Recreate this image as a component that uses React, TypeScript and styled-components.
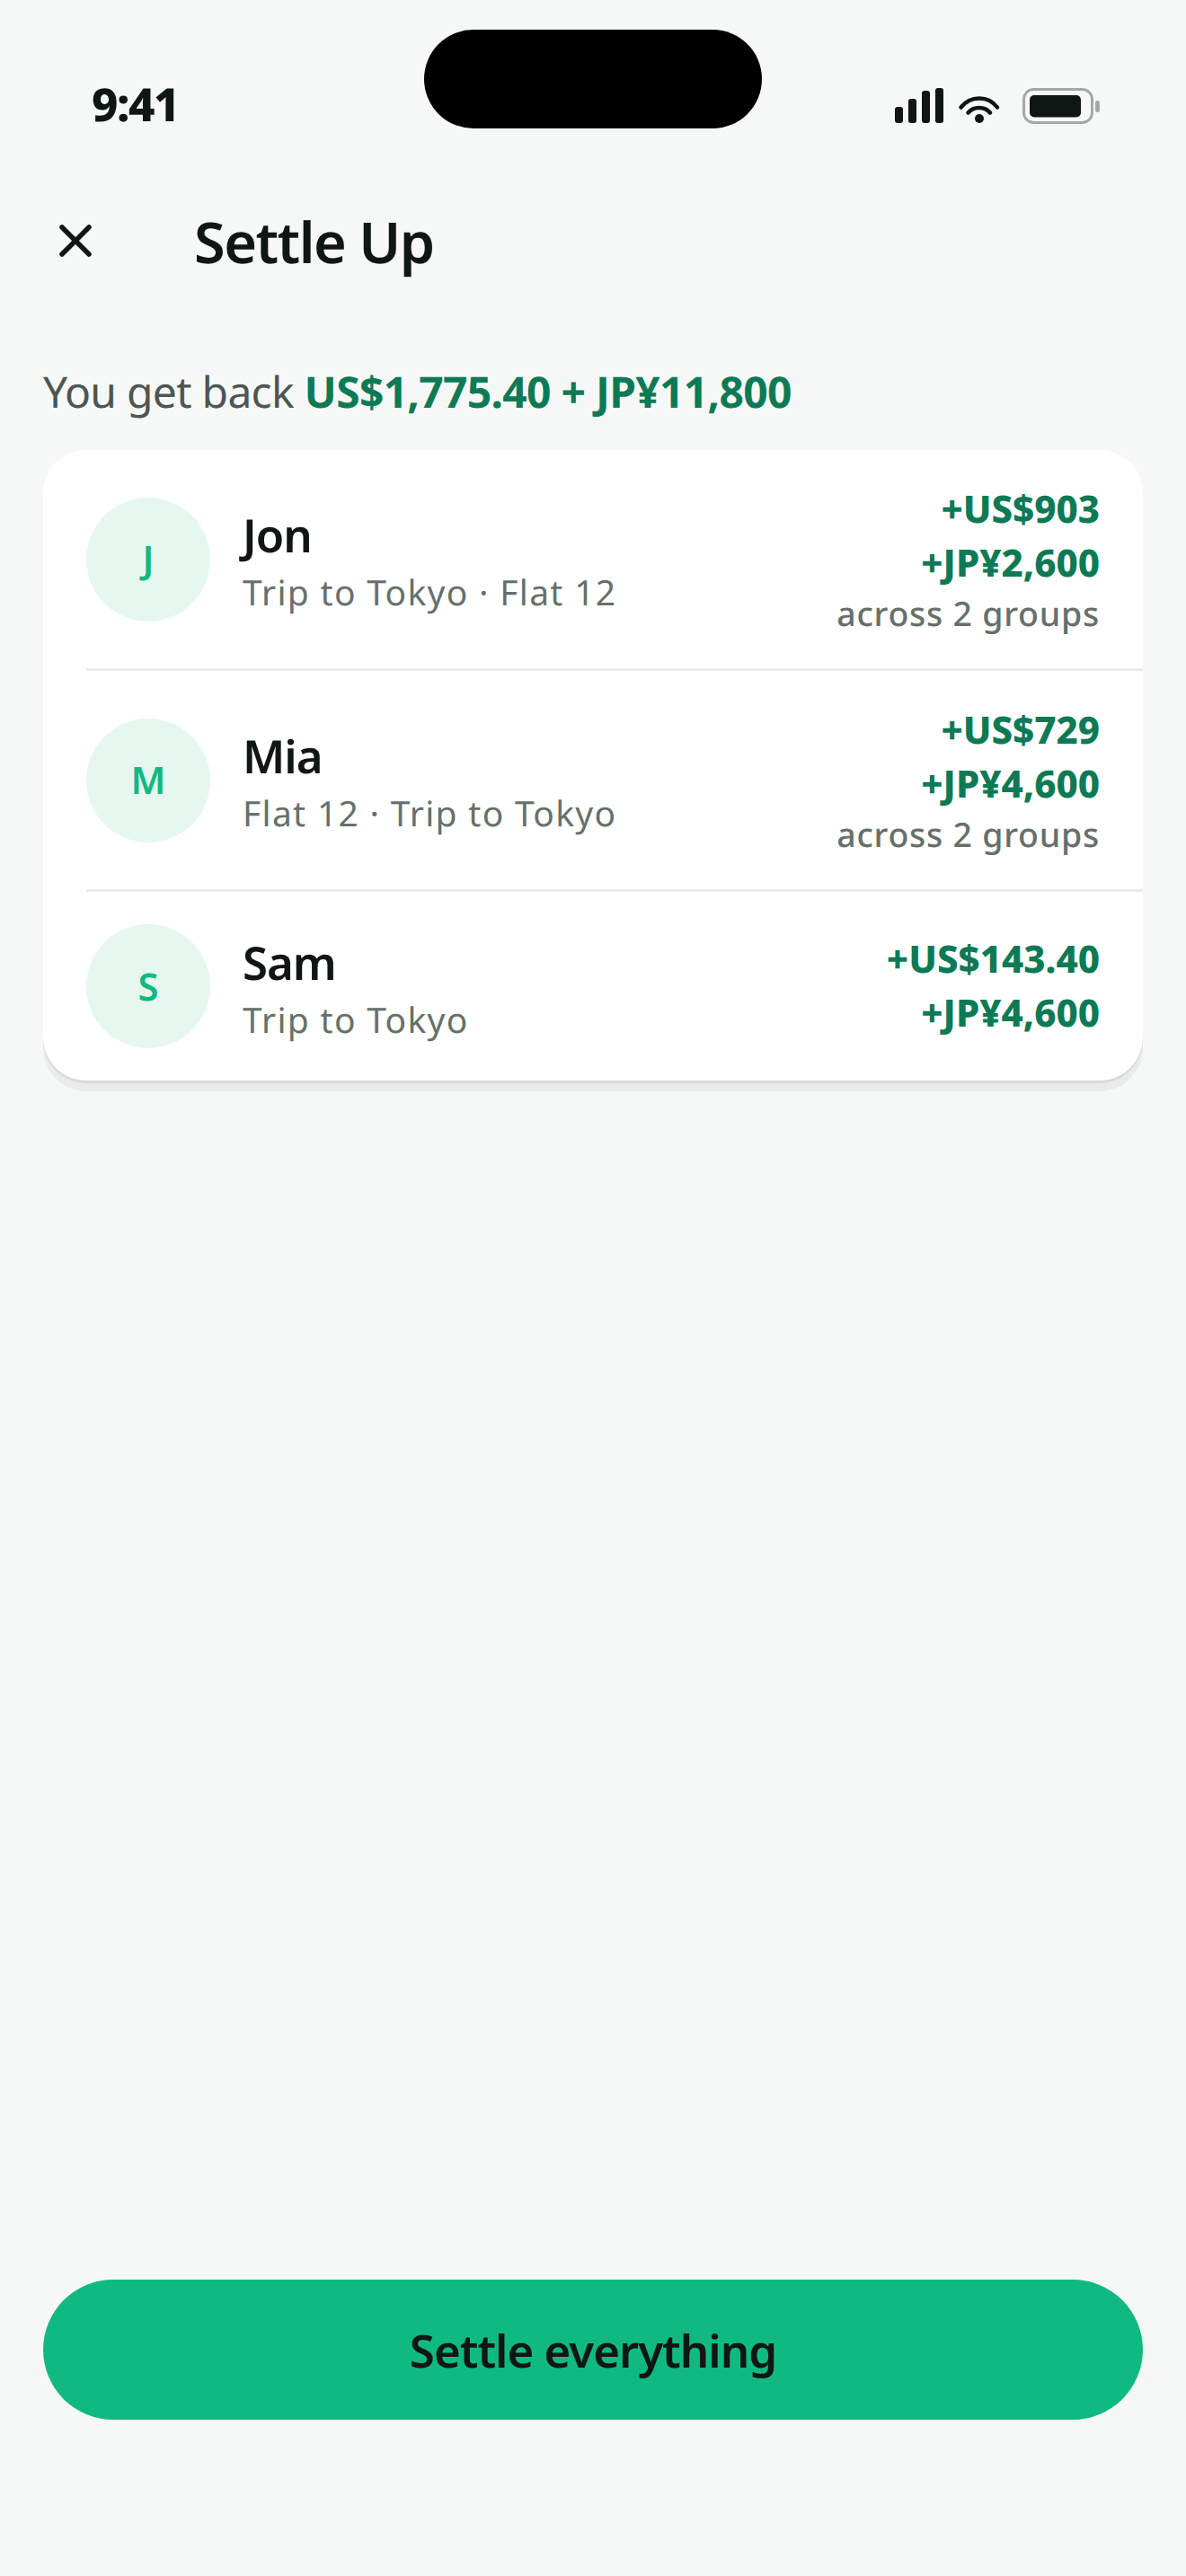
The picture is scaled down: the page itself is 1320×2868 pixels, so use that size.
import { X } from "lucide-react";
import styled, { createGlobalStyle } from "styled-components";

const GlobalStyle = createGlobalStyle`
  html, body {
    margin: 0;
    padding: 0;
    background: #f6f8f7;
  }
  body {
    font-family: "Noto Sans", "Open Sans", sans-serif;
    color: #101614;
    text-rendering: geometricPrecision;
  }
`;

const Screen = styled.div`
  width: 1320px;
  height: 2868px;
  display: flex;
  flex-direction: column;
  background: #f6f8f7;
  overflow: hidden;
`;

const StatusBar = styled.div`
  height: 176px;
  display: grid;
  grid-template-columns: 1fr 376px 1fr;
  padding-top: 33px;
  box-sizing: border-box;
`;

const Time = styled.div`
  padding: 47px 0 0 102px;
  font-size: 51px;
  line-height: 70px;
  font-weight: 800;
  letter-spacing: -1.5px;
`;

const Island = styled.div`
  width: 376px;
  height: 110px;
  border-radius: 55px;
  background: #000;
`;

const StatusIcons = styled.div`
  display: flex;
  align-items: flex-start;
  padding: 65px 0 0 148px;
`;

const Header = styled.header`
  height: 72px;
  margin-top: 56px;
  padding-left: 48px;
  display: flex;
  align-items: center;
  gap: 96px;
`;

const CloseButton = styled.button`
  width: 72px;
  height: 72px;
  padding: 0;
  border: 0;
  background: none;
  color: #101614;
  display: flex;
  align-items: center;
  justify-content: center;
`;

const Title = styled.h1`
  margin: 4px 0 0;
  font-size: 63px;
  line-height: 78px;
  font-weight: 600;
  letter-spacing: -1.5px;
`;

const Summary = styled.p`
  margin: 100px 48px 0;
  font-size: 48px;
  line-height: 66px;
  letter-spacing: -0.72px;
  color: #4d5652;

  strong {
    font-weight: 700;
    color: #0e7a55;
  }
`;

const Card = styled.section`
  margin: 31px 48px 0;
  background: #fff;
  border-radius: 48px;
  box-shadow: 0 3px 0 rgba(16, 22, 20, 0.08), 0 12px 0 rgba(16, 22, 20, 0.05);
`;

const Row = styled.div<{ $last?: boolean }>`
  margin-left: 48px;
  padding: 36px 48px 36px 0;
  display: flex;
  align-items: center;
  gap: 36px;
  border-bottom: ${(p) => (p.$last ? "none" : "3px solid #e8ecea")};
`;

const Avatar = styled.div`
  width: 138px;
  height: 138px;
  flex: none;
  border-radius: 50%;
  background: #e6f7f0;
  color: #10b981;
  display: flex;
  align-items: center;
  justify-content: center;
  font-size: 42px;
  font-weight: 600;
`;

const Person = styled.div`
  flex: 1;
  min-width: 0;
`;

const Name = styled.div`
  font-size: 51px;
  line-height: 75px;
  font-weight: 600;
  letter-spacing: -1.02px;
`;

const Groups = styled.div`
  font-size: 39px;
  line-height: 54px;
  letter-spacing: 1.3px;
  color: #667069;
`;

const Amounts = styled.div`
  text-align: right;
`;

const Amount = styled.div`
  font-size: 42px;
  line-height: 60px;
  font-weight: 800;
  color: #0e7a55;
`;

const Caption = styled.div`
  font-size: 37.5px;
  line-height: 51px;
  font-weight: 500;
  letter-spacing: 0.75px;
  color: #667069;
`;

const Footer = styled.div`
  margin-top: auto;
  padding: 0 48px 174px;
`;

const SettleButton = styled.button`
  width: 100%;
  height: 156px;
  border: 0;
  border-radius: 78px;
  background: #10b981;
  color: #101614;
  font-family: inherit;
  font-size: 51px;
  font-weight: 600;
  letter-spacing: -1.02px;
`;

const friends = [
  { name: "Jon", groups: "Trip to Tokyo · Flat 12", amounts: ["+US$903", "+JP¥2,600"], caption: "across 2 groups" },
  { name: "Mia", groups: "Flat 12 · Trip to Tokyo", amounts: ["+US$729", "+JP¥4,600"], caption: "across 2 groups" },
  { name: "Sam", groups: "Trip to Tokyo", amounts: ["+US$143.40", "+JP¥4,600"] },
];

const App = () => {
  return (
    <Screen>
      <GlobalStyle />
      <StatusBar>
        <Time>9:41</Time>
        <Island />
        <StatusIcons>
          <svg width="228" height="42" viewBox="0 0 228 42" fill="none">
            <rect x="0" y="21" width="9" height="18" rx="3" fill="#101614" />
            <rect x="15" y="12" width="9" height="27" rx="3" fill="#101614" />
            <rect x="30" y="3" width="9" height="36" rx="3" fill="#101614" />
            <rect x="45" y="-0" width="9" height="39" rx="3" fill="#101614" />
            <path d="M73.5 21.5C84 8 104 8 114 21.5" stroke="#101614" strokeWidth="4.5" strokeLinecap="round" />
            <path d="M81.5 27.5C87.5 20 100 20 106 27.5" stroke="#101614" strokeWidth="4.5" strokeLinecap="round" />
            <circle cx="94" cy="34" r="5" fill="#101614" />
            <rect x="143.5" y="1.5" width="76" height="37" rx="11" stroke="#a6a8a7" strokeWidth="3" />
            <rect x="150" y="8" width="57" height="24.5" rx="5" fill="#101614" />
            <rect x="223" y="14" width="5" height="13" rx="2.5" fill="#a6a8a7" />
          </svg>
        </StatusIcons>
      </StatusBar>
      <Header>
        <CloseButton aria-label="Close">
          <X size={60} strokeWidth={2.2} />
        </CloseButton>
        <Title>Settle Up</Title>
      </Header>
      <Summary>
        You get back <strong>US$1,775.40 + JP¥11,800</strong>
      </Summary>
      <Card>
        {friends.map((f, i) => (
          <Row key={f.name} $last={i === friends.length - 1}>
            <Avatar>{f.name[0]}</Avatar>
            <Person>
              <Name>{f.name}</Name>
              <Groups>{f.groups}</Groups>
            </Person>
            <Amounts>
              {f.amounts.map((a) => (
                <Amount key={a}>{a}</Amount>
              ))}
              {f.caption && <Caption>{f.caption}</Caption>}
            </Amounts>
          </Row>
        ))}
      </Card>
      <Footer>
        <SettleButton>Settle everything</SettleButton>
      </Footer>
    </Screen>
  );
};

export default App;
